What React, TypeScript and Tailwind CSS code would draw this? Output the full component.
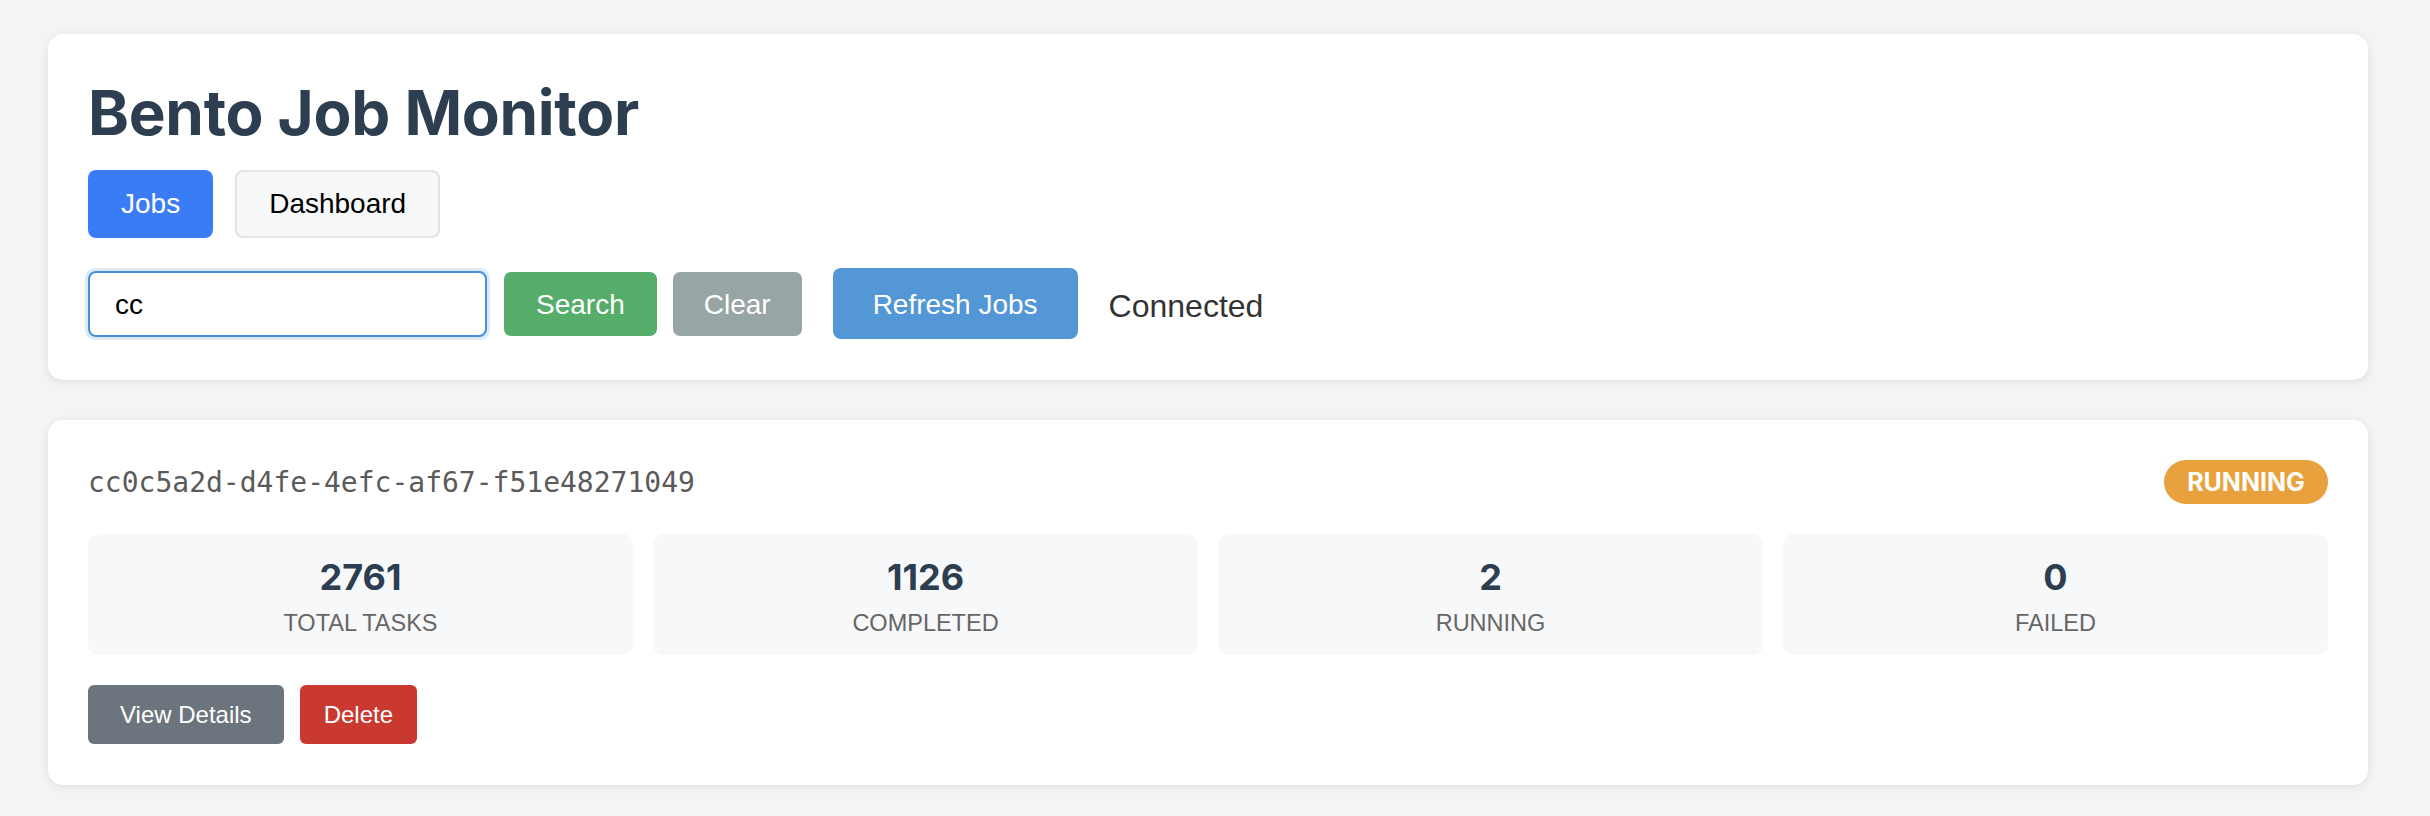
import React from "react";

const sans = "font-['Liberation_Sans',Arial,sans-serif]";
const inter = "font-['Inter',sans-serif]";

function Stat({ value, label }: { value: string; label: string }) {
  return (
    <div className="h-[121px] bg-[#f7f8fa] rounded-[10px] flex flex-col items-center pt-[25px]">
      <div className={`${inter} font-bold text-[36px] leading-[36px] text-[#2c3e50]`}>{value}</div>
      <div className={`${sans} mt-[17px] text-[23.5px] leading-[23.5px] text-[#666666]`}>{label}</div>
    </div>
  );
}

export default function App() {
  return (
    <div className="min-h-screen bg-[#f4f4f4] pt-[34px] pl-[48px] pr-[62px] pb-[30px]">
      <div className="bg-white rounded-[15px] shadow-[0_2px_10px_rgba(0,0,0,0.09)] px-[40px] pt-[48px] pb-[41px]">
        <h1 className={`${inter} font-bold text-[62px] leading-[62px] text-[#2c3e50] tracking-[-0.3px]`}>
          Bento Job Monitor
        </h1>
        <div className="mt-[26px] flex gap-[22px]">
          <button className={`${sans} h-[68px] px-[33px] rounded-[8px] bg-[#3a7bf6] text-white text-[28px]`}>
            Jobs
          </button>
          <button
            className={`${sans} h-[68px] px-[32px] rounded-[8px] bg-[#f7f8fa] border-2 border-[#e1e3e7] text-black text-[28px]`}
          >
            Dashboard
          </button>
        </div>
        <div className="mt-[30px] flex items-center h-[71px]">
          <div className="rounded-[10px] p-[3px] bg-[#dde9f6] -m-[3px]">
            <input
              readOnly
              value="cc"
              className={`${sans} block w-[399px] h-[66px] border-2 border-[#4a90d9] rounded-[8px] pl-[25px] pt-[2px] text-[28px] text-black outline-none bg-white`}
            />
          </div>
          <button className={`${sans} ml-[17px] h-[64px] px-[32px] pt-[2px] rounded-[7px] bg-[#56ad6a] text-white text-[28px]`}>
            Search
          </button>
          <button className={`${sans} ml-[16px] h-[64px] px-[31px] pt-[2px] rounded-[7px] bg-[#98a5a5] text-white text-[28px]`}>
            Clear
          </button>
          <button className={`${sans} ml-[31px] h-[71px] px-[40px] pt-[2px] rounded-[8px] bg-[#5397d6] text-white text-[28px]`}>
            Refresh Jobs
          </button>
          <span className={`${sans} ml-[31px] pt-[4px] text-[32px] text-[#333333]`}>Connected</span>
        </div>
      </div>

      <div className="mt-[40px] bg-white rounded-[15px] shadow-[0_2px_10px_rgba(0,0,0,0.09)] px-[40px] pt-[40px] pb-[41px]">
        <div className="flex items-center justify-between h-[44px]">
          <span className="font-['DejaVu_Sans_Mono',monospace] text-[28px] text-[#5a5a5a] pt-[2px]">
            cc0c5a2d-d4fe-4efc-af67-f51e48271049
          </span>
          <span
            className={`${inter} h-[44px] w-[164px] rounded-full bg-[#e8a13c] text-white font-bold text-[25px] pt-[1px] flex items-center justify-center`}
          >
            RUNNING
          </span>
        </div>
        <div className="mt-[30px] grid grid-cols-4 gap-[20px]">
          <Stat value="2761" label="TOTAL TASKS" />
          <Stat value="1126" label="COMPLETED" />
          <Stat value="2" label="RUNNING" />
          <Stat value="0" label="FAILED" />
        </div>
        <div className="mt-[30px] flex gap-[16px]">
          <button className={`${sans} h-[59px] px-[32px] rounded-[6px] bg-[#6c757d] text-white text-[24px]`}>
            View Details
          </button>
          <button className={`${sans} h-[59px] px-[24px] rounded-[6px] bg-[#c9392f] text-white text-[24px]`}>
            Delete
          </button>
        </div>
      </div>
    </div>
  );
}
